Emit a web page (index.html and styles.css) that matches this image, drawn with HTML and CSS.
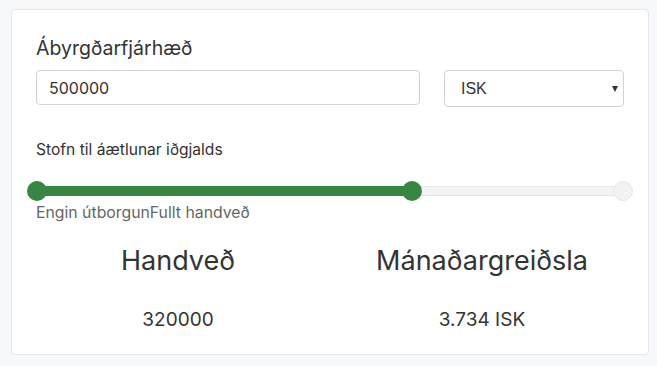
FILE: index.html
```html
<!DOCTYPE html>
<html lang="is">
<head>
<meta charset="utf-8">
<title>Handveð</title>
<link rel="stylesheet" href="styles.css">
</head>
<body>
<div class="card">
  <div class="field">
    <label class="label" for="amount">Ábyrgðarfjárhæð</label>
    <div class="input-row">
      <input id="amount" class="input" type="text" value="500000">
      <div class="select-wrap">
        <select class="select">
          <option>ISK</option>
        </select>
      </div>
    </div>
  </div>
  <div class="sub-label">Stofn til áætlunar iðgjalds</div>
  <div class="slider">
    <div class="track">
      <div class="fill" style="width:64%"></div>
      <span class="thumb thumb-green" style="left:0%"></span>
      <span class="thumb thumb-green" style="left:64%"></span>
      <span class="thumb thumb-end" style="left:100%"></span>
    </div>
  </div>
  <div class="range-labels">Engin útborgunFullt handveð</div>
  <div class="results">
    <div class="result">
      <h2 class="result-title">Handveð</h2>
      <div class="result-value">320000</div>
    </div>
    <div class="result">
      <h2 class="result-title">Mánaðargreiðsla</h2>
      <div class="result-value">3.734 ISK</div>
    </div>
  </div>
</div>
</body>
</html>
```
FILE: styles.css
```css
* { box-sizing: border-box; }
html, body { margin: 0; padding: 0; }
body {
  background: #f7f8fa;
  font-family: Inter, "Noto Sans", sans-serif;
  color: #333;
  padding: 9px 8px 0 11px;
}
.card {
  width: 638px;
  height: 346px;
  background: #fff;
  border: 1px solid #e4e7eb;
  border-radius: 4px;
  padding: 23px 14px 0 14px;
}
.field { padding: 0 10px; }
.label {
  display: block;
  font-size: 19.5px;
  line-height: 30px;
  color: #333;
}
.input-row {
  display: flex;
  align-items: flex-start;
  margin-top: 7px;
  gap: 24px;
}
.input {
  width: 385px;
  height: 35px;
  border: 1px solid #ced4da;
  border-radius: 4px;
  padding: 0 12px;
  font-family: Inter, sans-serif;
  font-size: 16px;
  color: #333;
  outline: none;
}
.select-wrap {
  position: relative;
  width: 180px;
}
.select-wrap::after {
  content: "";
  position: absolute;
  right: 6px;
  top: 16px;
  border-left: 3.5px solid transparent;
  border-right: 3.5px solid transparent;
  border-top: 6px solid #333;
  pointer-events: none;
}
.select {
  -webkit-appearance: none;
  appearance: none;
  width: 180px;
  height: 37px;
  border: 1px solid #ced4da;
  border-radius: 4px;
  background: #fff;
  padding: 0 16px;
  font-family: "Liberation Sans", Arial, sans-serif;
  font-size: 16px;
  color: #333;
}
.sub-label {
  margin-top: 31px;
  padding: 0 10px;
  font-size: 15.6px;
  line-height: 24px;
  color: #333;
}
.slider {
  margin-top: 19px;
  height: 20px;
  padding: 5px 10px;
}
.track {
  position: relative;
  height: 10px;
  background: #f3f3f3;
  border: 1px solid #e6e6e6;
  border-radius: 5px;
}
.fill {
  height: 10px;
  margin: -1px 0 0 -1px;
  background: #378641;
  border-radius: 5px 0 0 5px;
}
.thumb {
  position: absolute;
  top: -6px;
  width: 20px;
  height: 20px;
  margin-left: -10px;
  border-radius: 50%;
}
.thumb-green { background: #378641; }
.thumb-end {
  background: #f3f3f3;
  border: 1px solid #e8e8e8;
}
.range-labels {
  margin-top: 1px;
  padding: 0 10px;
  font-size: 15.8px;
  line-height: 22px;
  color: #666;
}
.results {
  display: grid;
  grid-template-columns: 1fr 1fr;
  margin-top: 20px;
}
.result { text-align: center; }
.result-title {
  margin: 0;
  font-weight: 400;
  font-size: 27px;
  line-height: 34px;
  color: #333;
}
.result-value {
  margin-top: 27px;
  font-size: 19px;
  line-height: 30px;
  color: #333;
}
```
